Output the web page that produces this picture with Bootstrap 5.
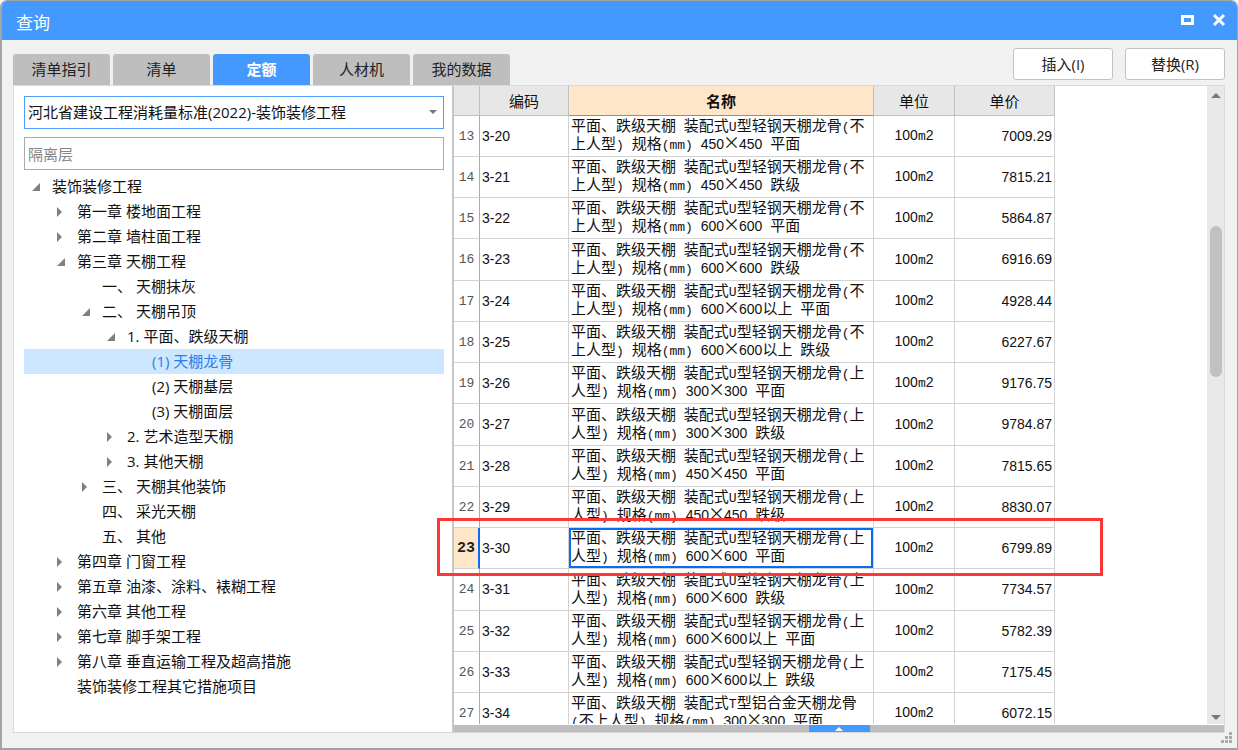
<!DOCTYPE html>
<html lang="zh-CN">
<head>
<meta charset="utf-8">
<meta name="viewport" content="width=device-width, initial-scale=1">
<title>查询</title>
<link rel="stylesheet" href="https://cdn.jsdelivr.net/npm/bootstrap@5.3.0/dist/css/bootstrap.min.css">
<style>
body{font-family:"Open Sans","Noto Sans CJK SC",sans-serif;font-size:15px;line-height:25px;color:#111;background:#fff}
.win{background:#f1f1f1;border:1px solid #a3a3a3;border-left-width:2px;border-bottom-width:2px;border-radius:7px 7px 0 0;overflow:hidden}
.title-bar{background:#4499ff;color:#fff;height:39px;font-size:17px;padding:3px 10px 0 14px}
.win-btn{background:none;border:0;padding:0;width:16px;height:16px;line-height:0}
.tool-row{height:45px;padding:0 12px 0 11px}
.tabs{gap:3px}
.tab-btn{width:97px;height:31px;border:0;border-radius:3px 3px 0 0;background:#bebebe;color:#222;padding:0}
.tab-btn.active{background:#4499ff;color:#fff;font-weight:700}
.act-btn{width:100px;height:32px;background:#fff;border:1px solid #c3c3c3;border-radius:3px;color:#222;padding:0}
.act-gap{gap:12px;padding-top:8px}
.main-panel{margin:0 12px 15px 11px;background:#fff;border:1px solid #dadada;min-height:0}
.side{flex:0 0 438px;padding:10px 8px 0 10px;min-height:0;overflow:hidden}
.side .form-select,.side .form-control{height:33px;border-radius:0;font-size:15px;line-height:25px;padding:3px;color:#111}
.side .form-select{border:1px solid #4f9dfb;margin-bottom:8px;background:#fff url("data:image/svg+xml,%3Csvg xmlns='http://www.w3.org/2000/svg' viewBox='0 0 8 5'%3E%3Cpath fill='%23777' d='M0 0h8L4 4z'/%3E%3C/svg%3E") no-repeat right 6px center/8px 5px}
.side .form-control{border:1px solid #aaa}
.side .form-control::placeholder{color:#858585;opacity:1}
.tree{margin:4px 0 0;word-spacing:0}
.tree a{display:flex;align-items:center;height:25px;color:#111;text-decoration:none;white-space:nowrap}
.tree a.active{background:#cce7ff;color:#2b7de9}
.twist{flex:0 0 21px;height:10px;line-height:0}
.twist svg{display:block}
.lv0{padding-left:7px}.lv1{padding-left:32px}.lv2{padding-left:57px}.lv3{padding-left:82px}.lv4{padding-left:107px}
.grid-side{min-width:0;min-height:0;border-left:2px solid #c6c6c6}
.sheet{width:601px;table-layout:fixed;border-collapse:separate;border-spacing:0;line-height:17px;font-family:"Noto Sans CJK SC",sans-serif}
.sheet th,.sheet td{border-right:1px solid #d2d2d2;border-bottom:1px solid #d2d2d2;padding:0 2px;height:41px;vertical-align:middle;overflow:hidden;white-space:nowrap}
.sheet td{padding-bottom:4px}
.sheet tbody tr:nth-child(4n) td{height:42px}
.sheet thead th{height:30px;background:#e7e7e7;font-weight:400;text-align:center;border-color:#c0c0c0}
.sheet thead th.hot{background:#ffe6c8;font-weight:700;border-bottom:1px solid #4f9dfb}
.sheet tbody th{padding:0;text-align:center;color:#555;font:400 13px/17px "Liberation Mono",monospace;border-right-color:#aaa}
.sheet tbody tr:nth-child(4n) th{height:42px}
.sheet .cur th{background:#ffe6c8;color:#222;font-weight:700;font-size:15px;border-right:2px solid #0a6cf5}
.sheet .cur .nm{box-shadow:inset 0 0 0 2px #0a6cf5}
.lt{font-family:"Liberation Mono",monospace;font-size:13px;line-height:12px}
.dg{font-family:"Liberation Sans",sans-serif;font-size:14px;line-height:12px}
.tms{display:inline-flex;justify-content:center;width:15px;font-size:17px;line-height:12px}
.vbar{flex:0 0 17px;background:#e8e8e8;padding:7px 2px 4px}
.thumb{width:12px;height:151px;border-radius:6px;background:#c1c1c1}
.hbar{height:7px;margin-top:1px;background:#bebebe}
.pull{width:61px;height:7px;background:#4499ff;border:0;padding:0;line-height:0}
.callout-box{left:-17px;top:432px;width:666px;height:58px;border:3px solid #ff3636;pointer-events:none}
.grip{right:4px;bottom:4px;line-height:0}
</style>
</head>
<body>
<div class="win vh-100 d-flex flex-column position-relative">
  <header class="title-bar d-flex align-items-center justify-content-between flex-shrink-0">
    <span>查询</span>
    <span class="d-flex gap-3 pb-1">
      <button class="win-btn" aria-label="最大化"><svg width="16" height="16"><path d="M2 3h13v10H2zM5 6v4h7V6z" fill="#fff" fill-rule="evenodd"/></svg></button>
      <button class="win-btn" aria-label="关闭"><svg width="16" height="16"><path d="M3 3l10 10M13 3L3 13" stroke="#fff" stroke-width="3"/></svg></button>
    </span>
  </header>
  <div class="tool-row d-flex justify-content-between flex-shrink-0">
    <nav class="tabs d-flex align-items-end">
      <button class="tab-btn">清单指引</button>
      <button class="tab-btn">清单</button>
      <button class="tab-btn active">定额</button>
      <button class="tab-btn">人材机</button>
      <button class="tab-btn">我的数据</button>
    </nav>
    <div class="act-gap d-flex">
      <button class="act-btn">插入(I)</button>
      <button class="act-btn">替换(R)</button>
    </div>
  </div>
  <main class="main-panel d-flex flex-grow-1">
    <aside class="side">
      <select class="form-select" aria-label="定额库"><option>河北省建设工程消耗量标准(2022)-装饰装修工程</option></select>
      <input class="form-control" type="text" placeholder="隔离层" aria-label="搜索">
      <ul class="tree list-unstyled" id="tree"></ul>
    </aside>
    <section class="grid-side flex-grow-1 d-flex flex-column position-relative">
      <div class="d-flex flex-grow-1 overflow-hidden">
        <div class="flex-grow-1 overflow-hidden">
          <table class="sheet">
            <colgroup><col style="width:26px"><col style="width:89px"><col style="width:305px"><col style="width:81px"><col style="width:100px"></colgroup>
            <thead><tr><th></th><th>编码</th><th class="hot">名称</th><th>单位</th><th>单价</th></tr></thead>
            <tbody id="rows"></tbody>
          </table>
        </div>
        <div class="vbar d-flex flex-column align-items-center">
          <svg width="10" height="5"><path d="M0 5L5 0l5 5z" fill="#777780"/></svg>
          <div style="flex:127 0 0"></div>
          <div class="thumb"></div>
          <div style="flex:336 0 0"></div>
          <svg width="10" height="5"><path d="M0 0h10L5 5z" fill="#777780"/></svg>
        </div>
      </div>
      <div class="hbar d-flex justify-content-center flex-shrink-0">
        <button class="pull" aria-label="展开"><svg width="8" height="7"><path d="M0 6l4-4 4 4z" fill="#fff"/></svg></button>
      </div>
      <div class="callout-box position-absolute"></div>
    </section>
  </main>
  <div class="grip position-absolute"><svg width="12" height="12" fill="#aaa"><path d="M8 0h3v3H8zM4 4h3v3H4zM8 4h3v3H8zM0 8h3v3H0zM4 8h3v3H4zM8 8h3v3H8z"/></svg></div>
</div>
<script src="https://cdn.jsdelivr.net/npm/bootstrap@5.3.0/dist/js/bootstrap.bundle.min.js"></script>
<script>
// [depth, state, label]; state: o = open, c = closed, '' = leaf
const nodes = [
  [0,'o','装饰装修工程'],[1,'c','第一章 楼地面工程'],[1,'c','第二章 墙柱面工程'],[1,'o','第三章 天棚工程'],
  [2,'','一、 天棚抹灰'],[2,'o','二、 天棚吊顶'],[3,'o','1. 平面、跌级天棚'],[4,'','(1) 天棚龙骨'],
  [4,'','(2) 天棚基层'],[4,'','(3) 天棚面层'],[3,'c','2. 艺术造型天棚'],[3,'c','3. 其他天棚'],
  [2,'c','三、 天棚其他装饰'],[2,'','四、 采光天棚'],[2,'','五、 其他'],[1,'c','第四章 门窗工程'],
  [1,'c','第五章 油漆、涂料、裱糊工程'],[1,'c','第六章 其他工程'],[1,'c','第七章 脚手架工程'],
  [1,'c','第八章 垂直运输工程及超高措施'],[1,'','装饰装修工程其它措施项目']
];
const marks = {
  o:'<svg width="10" height="10"><path d="M9 1v8H1z" fill="#808080"/></svg>',
  c:'<svg width="10" height="10"><path d="M1 0l5 5-5 5z" fill="#808080"/></svg>',
  '':''
};
document.getElementById('tree').innerHTML = nodes.map(([d,s,t]) =>
  `<li><a href="#" class="lv${d}${t.startsWith('(1)')?' active':''}"><span class="twist">${marks[s]}</span>${t}</a></li>`).join('');

// number, size, shape, price
const items = [
  [13,'450×450','平面','7009.29'],[14,'450×450','跌级','7815.21'],[15,'600×600','平面','5864.87'],
  [16,'600×600','跌级','6916.69'],[17,'600×600以上','平面','4928.44'],[18,'600×600以上','跌级','6227.67'],
  [19,'300×300','平面','9176.75'],[20,'300×300','跌级','9784.87'],[21,'450×450','平面','7815.65'],
  [22,'450×450','跌级','8830.07'],[23,'600×600','平面','6799.89'],[24,'600×600','跌级','7734.57'],
  [25,'600×600以上','平面','5782.39'],[26,'600×600以上','跌级','7175.45'],[27,'300×300','平面','6072.15']
];
// Half-width runs get their own faces beside the full-width Chinese text
const mix = s => s.replace(/[0-9.\-]+|[A-Za-z() ]+|×/g, m =>
  m === '×' ? '<span class="tms">×</span>' : `<span class="${/[0-9]/.test(m)?'dg':'lt'}">${m}</span>`);
document.getElementById('rows').innerHTML = items.map(([n,size,shape,price]) => {
  const head = n === 27 ? ['平面、跌级天棚 装配式T型铝合金天棚龙骨','(不上人型) ']
    : n < 19 ? ['平面、跌级天棚 装配式U型轻钢天棚龙骨(不','上人型) ']
    : ['平面、跌级天棚 装配式U型轻钢天棚龙骨(上','人型) '];
  return `<tr${n===23?' class="cur"':''}><th scope="row">${n}</th><td>${mix('3-'+(n+7))}</td>` +
    `<td class="nm">${mix(head[0])}<br>${mix(head[1]+'规格(mm) '+size+' '+shape)}</td>` +
    `<td class="text-center">${mix('100m2')}</td><td class="text-end">${mix(price)}</td></tr>`;
}).join('');
</script>
</body>
</html>
